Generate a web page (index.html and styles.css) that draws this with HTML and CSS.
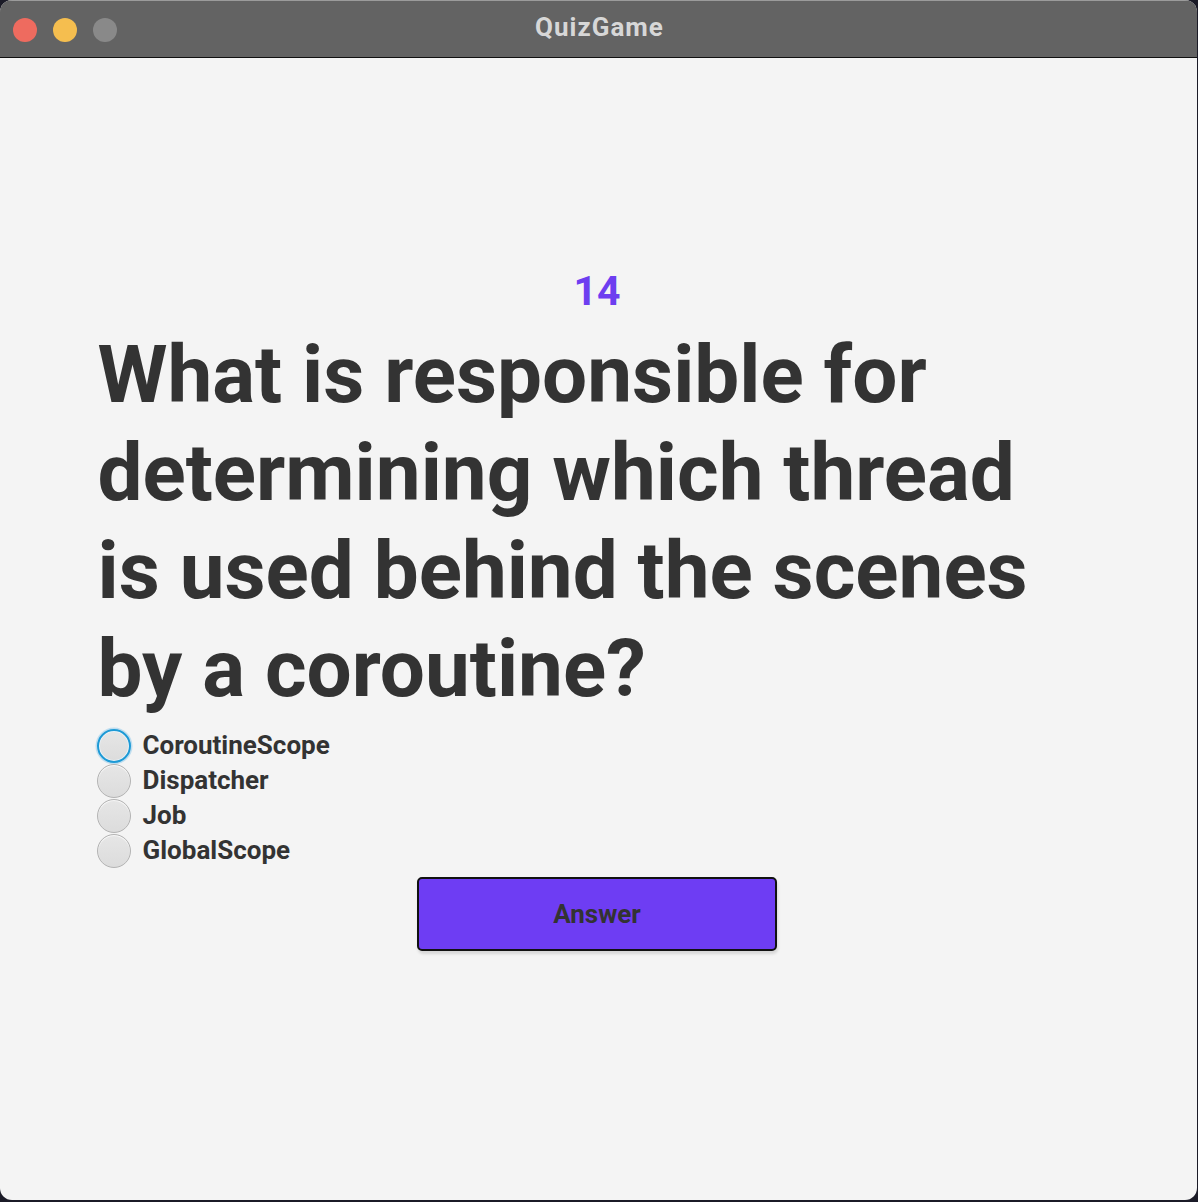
FILE: index.html
```html
<!DOCTYPE html>
<html>
<head>
<meta charset="utf-8">
<link rel="stylesheet" href="styles.css">
<title>QuizGame</title>
</head>
<body>
<div class="window">
  <div class="titlebar">
    <div class="lights">
      <span class="light red"></span>
      <span class="light yellow"></span>
      <span class="light gray"></span>
    </div>
    <div class="title">QuizGame</div>
  </div>
  <div class="content">
    <div class="number">14</div>
    <div class="quiz">
      <div class="question">What is responsible for determining which thread is used behind the scenes by a coroutine?</div>
      <div class="options">
        <label class="option"><span class="radio focused"></span><span class="label">CoroutineScope</span></label>
        <label class="option"><span class="radio"></span><span class="label">Dispatcher</span></label>
        <label class="option"><span class="radio"></span><span class="label">Job</span></label>
        <label class="option"><span class="radio"></span><span class="label">GlobalScope</span></label>
      </div>
    </div>
    <button class="answer">Answer</button>
  </div>
</div>
</body>
</html>
```

FILE: styles.css
```css
html, body {
  margin: 0;
  padding: 0;
  background: #1b1b27;
}
body {
  width: 1198px;
  height: 1202px;
  overflow: hidden;
}
.window {
  width: 1197px;
  height: 1200px;
  background: #f4f4f4;
  border-radius: 12px;
  overflow: hidden;
  display: flex;
  flex-direction: column;
  font-family: Roboto, "Liberation Sans", sans-serif;
}
.titlebar {
  background: #636363;
  border-top: 1px solid #9b9b9b;
  border-bottom: 1px solid #111;
  box-sizing: border-box;
  height: 58px;
  flex: 0 0 58px;
  display: flex;
  align-items: center;
  position: relative;
}
.lights {
  display: flex;
  gap: 16px;
  padding-left: 13px;
  margin-top: 1px;
}
.light {
  width: 24px;
  height: 24px;
  border-radius: 50%;
  display: block;
}
.red { background: #ee6b5f; }
.yellow { background: #f5be4f; }
.gray { background: #898989; }
.title {
  position: absolute;
  left: 0;
  right: 0;
  top: 11px;
  text-align: center;
  font-weight: 700;
  font-size: 26px;
  color: #d7d7d7;
  letter-spacing: 1px;
  padding-left: 2px;
}
.content {
  display: flex;
  flex-direction: column;
  align-items: center;
  padding-top: 210px;
}
.number {
  font-size: 41px;
  font-weight: 700;
  color: #6d3ef0;
  line-height: 47px;
  margin-left: -3px;
}
.quiz {
  width: 1000px;
  margin-top: 11px;
  margin-left: -2px;
}
.question {
  width: 950px;
  font-size: 80px;
  font-weight: 700;
  line-height: 98px;
  color: #333333;
}
.options {
  display: flex;
  flex-direction: column;
  margin-top: 10px;
}
.option {
  height: 35px;
  display: flex;
  align-items: center;
  gap: 12px;
}
.radio {
  width: 34px;
  height: 34px;
  border-radius: 50%;
  border: 1.5px solid #b3b3b3;
  background: linear-gradient(#e6e6e6, #dcdcdc);
  box-sizing: border-box;
  display: block;
  margin-left: -1px;
  box-shadow: inset 0 1px 1px rgba(255,255,255,0.8);
}
.radio.focused {
  border: 2.5px solid #1d9ad6;
  box-shadow: 0 0 0 1.5px rgba(140, 200, 235, 0.5), inset 0 0 0 1px #e8f2f8;
}
.label {
  font-size: 26px;
  font-weight: 700;
  color: #333333;
  padding-bottom: 1px;
}
.answer {
  margin-top: 9px;
  width: 360px;
  height: 74px;
  background: #6e3df3;
  border: 2px solid #111;
  border-radius: 5px;
  font-family: Roboto, "Liberation Sans", sans-serif;
  font-weight: 700;
  font-size: 26px;
  color: #333333;
  box-shadow: 1px 3px 3px rgba(0, 0, 0, 0.12);
  padding: 0;
  margin-left: -3px;
}
```
